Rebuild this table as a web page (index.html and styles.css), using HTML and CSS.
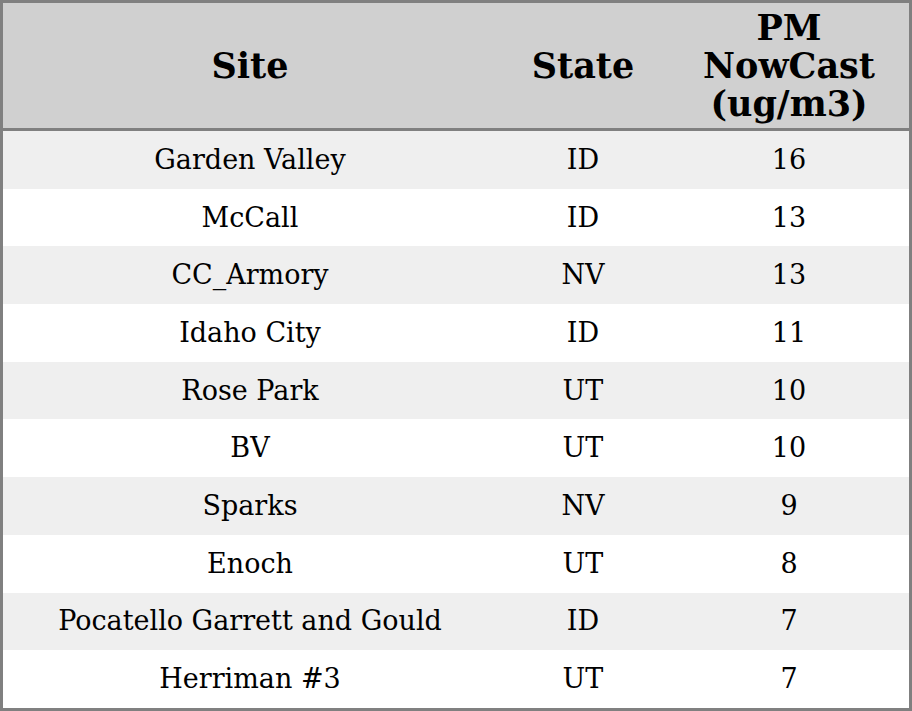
FILE: index.html
```html
<!DOCTYPE html>
<html>
<head>
<meta charset="utf-8">
<link rel="stylesheet" href="styles.css">
</head>
<body>
<table class="aq">
  <colgroup>
    <col class="c-site">
    <col class="c-state">
    <col class="c-pm">
  </colgroup>
  <thead>
    <tr><th>Site</th><th>State</th><th>PM<br>NowCast<br>(ug/m3)</th></tr>
  </thead>
  <tbody>
    <tr><td>Garden Valley</td><td>ID</td><td>16</td></tr>
    <tr><td>McCall</td><td>ID</td><td>13</td></tr>
    <tr><td>CC_Armory</td><td>NV</td><td>13</td></tr>
    <tr><td>Idaho City</td><td>ID</td><td>11</td></tr>
    <tr><td>Rose Park</td><td>UT</td><td>10</td></tr>
    <tr><td>BV</td><td>UT</td><td>10</td></tr>
    <tr><td>Sparks</td><td>NV</td><td>9</td></tr>
    <tr><td>Enoch</td><td>UT</td><td>8</td></tr>
    <tr><td>Pocatello Garrett and Gould</td><td>ID</td><td>7</td></tr>
    <tr><td>Herriman #3</td><td>UT</td><td>7</td></tr>
  </tbody>
</table>
</body>
</html>
```

FILE: styles.css
```css
html, body {
  margin: 0;
  padding: 0;
  background: #ffffff;
}
.aq {
  width: 912px;
  height: 711px;
  border-collapse: separate;
  border-spacing: 0;
  border: 3px solid #808080;
  box-sizing: border-box;
  font-family: "DejaVu Serif", serif;
  color: #000;
  table-layout: fixed;
}
.c-site { width: 494px; }
.c-state { width: 172px; }
.c-pm { width: 240px; }
.aq th {
  background: #d0d0d0;
  font-size: 35px;
  font-weight: bold;
  line-height: 38px;
  height: 128px;
  padding: 0;
  text-align: center;
  vertical-align: middle;
  border-bottom: 3px solid #808080;
  box-sizing: border-box;
}
.aq td {
  font-size: 27px;
  line-height: 30px;
  padding: 0;
  height: 57.7px;
  text-align: center;
  vertical-align: middle;
}
.aq tbody tr:nth-child(odd) td {
  background: #efefef;
}
```
